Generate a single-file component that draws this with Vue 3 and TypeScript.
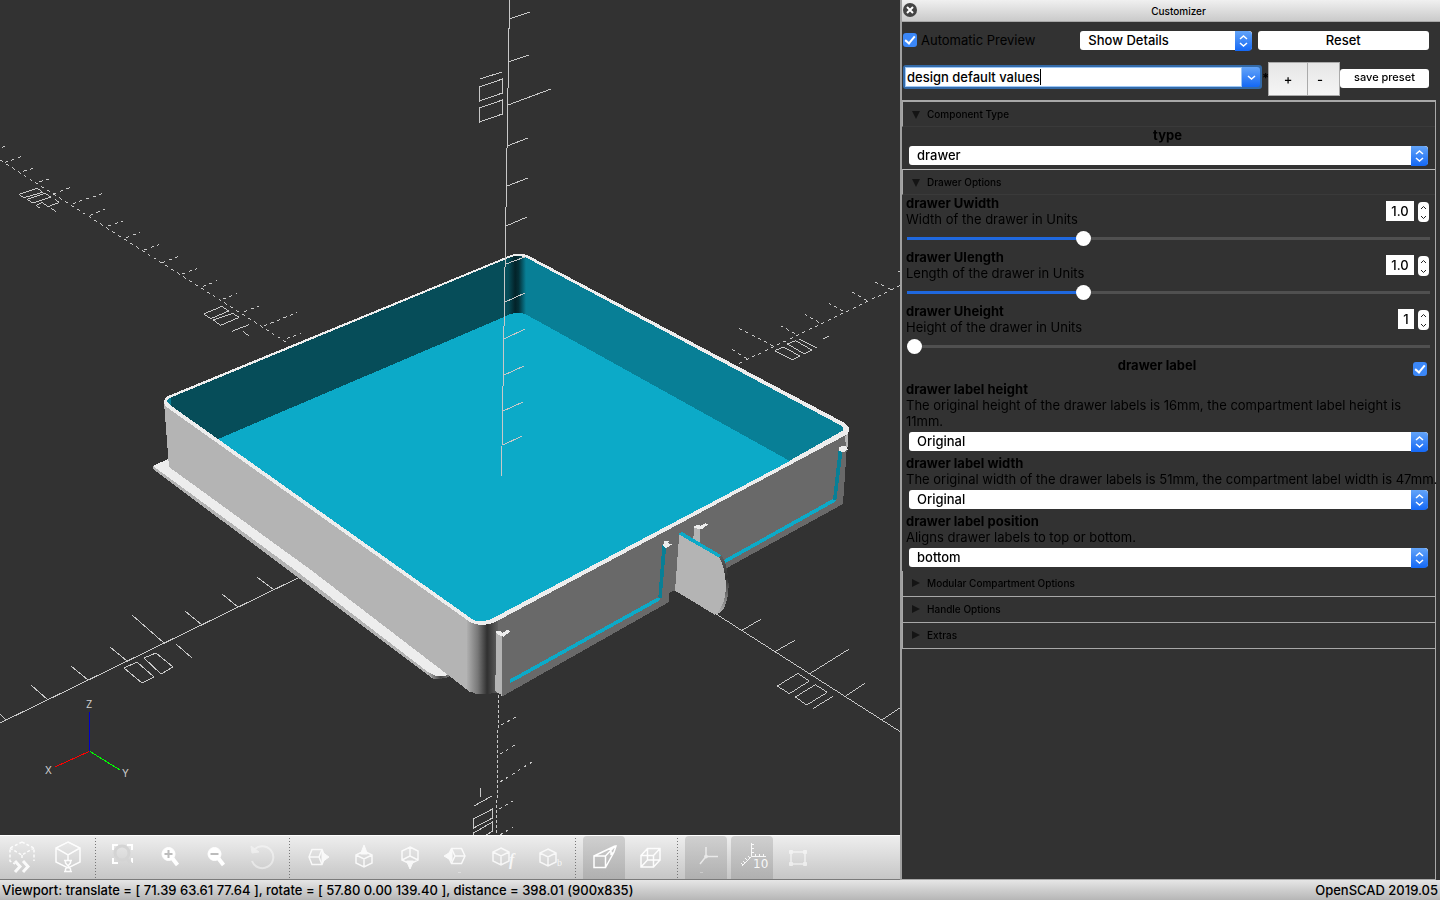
<script setup lang="ts">
import { onMounted, reactive, ref } from 'vue'

interface Shape { d: string; w?: number; fill?: string; stroke?: string; dash?: string }
interface Glyph { t: string; x: number; y: number; size: number; cls: string }
interface Tool { name: string; on?: boolean; dim?: number; shapes: Shape[]; glyph?: Glyph }

const toolGroups: Tool[][] = [
  [
    { name: 'Preview', dim: 0.9, shapes: [
      { d: 'M21 6L33 12V25M21 6L9 12V25L14 28M9 12L21 19L33 12M21 19V24', w: 1.5, dash: '3 2' },
      { d: 'M14 25L19 30.500L14 36M22 25L27 30.500L22 36', w: 3 } ] },
    { name: 'Render', dim: 0.95, shapes: [
      { d: 'M21 6L33 12V26L21 32L9 26V12ZM9 12L21 19L33 12M21 19V24', w: 1.5 },
      { d: 'M17 24.500H25M17 35.500H25M18.500 25V27L23.500 33V35M23.500 25V27L18.500 33V35', w: 1.5 } ] },
  ],
  [
    { name: 'View All', dim: 1, shapes: [
      { d: 'M10 14V9H15M24 9H29V14M29 22V27M10 22V27H15', w: 2 },
      { d: 'M12 17a7 7 0 1 0 14 0a7 7 0 1 0 -14 0M24 23L29 29', w: 3, stroke: '#d4d4d4' } ] },
    { name: 'Zoom In', dim: 1, shapes: [
      { d: 'M13 18a6.500 6.500 0 1 0 13 0a6.500 6.500 0 1 0 -13 0', w: 1, fill: '#fff' },
      { d: 'M23.500 22.500L28.500 29', w: 4 },
      { d: 'M15.500 18H23.500M19.500 14V22', w: 2, stroke: '#bcbcbc' } ] },
    { name: 'Zoom Out', dim: 1, shapes: [
      { d: 'M13 18a6.500 6.500 0 1 0 13 0a6.500 6.500 0 1 0 -13 0', w: 1, fill: '#fff' },
      { d: 'M23.500 22.500L28.500 29', w: 4 },
      { d: 'M15.500 18H23.500', w: 2, stroke: '#bcbcbc' } ] },
    { name: 'Reset View', dim: 0.45, shapes: [
      { d: 'M13 14A11 11 0 1 1 11 25', w: 2 },
      { d: 'M10 10L11 17L18 16Z', w: 1, fill: '#fff' } ] },
  ],
  [
    { name: 'Right', dim: 0.85, shapes: [
      { d: 'M12 21L15 13.500H25L28 21L25 28.500H15ZM12 21H22M25 13.500L22 21L25 28.500', w: 1.5 },
      { d: 'M25 16L32 21L25 26Z', w: 1, fill: '#fff' } ] },
    { name: 'Top', dim: 0.85, shapes: [
      { d: 'M21 15L29 19V27L21 31L13 27V19ZM13 19L21 23L29 19M21 23V31', w: 1.5 },
      { d: 'M21 9L24.500 18H17.500Z', w: 1, fill: '#fff' } ] },
    { name: 'Bottom', dim: 0.85, shapes: [
      { d: 'M21 11L29 15V24L21 28L13 24V15ZM21 11V20L13 24M21 20L29 24', w: 1.5 },
      { d: 'M21 33L24.500 25H17.500Z', w: 1, fill: '#fff' } ] },
    { name: 'Left', dim: 0.85, shapes: [
      { d: 'M30 20L26.500 12.500H16.500L13 20L16.500 27.500H26.500ZM30 20H20M16.500 12.500L20 20L16.500 27.500', w: 1.5 },
      { d: 'M17 15L9 20L17 25Z', w: 1, fill: '#fff' },
      { d: 'M23 36.500H26', w: 1, stroke: '#e0e0e0' } ] },
    { name: 'Front', dim: 0.8, shapes: [
      { d: 'M20 12L28 16V25L20 29L12 25V16ZM12 16L20 20L28 16M20 20V29', w: 1.5 } ],
      glyph: { t: 'f', x: 28, y: 29, size: 16, cls: 'ital' } },
    { name: 'Back', dim: 0.8, shapes: [
      { d: 'M21 13L29 17V26L21 30L13 26V17ZM13 17L21 21L29 17M21 21V30', w: 1.5 } ],
      glyph: { t: 'b', x: 30, y: 30, size: 10, cls: 'serif' } },
  ],
  [
    { name: 'Perspective', on: true, dim: 1, shapes: [
      { d: 'M11 20H22.500V31.500H11ZM11 20L32 10L22.500 20M32 10L33 10L31 16L22.500 31.500M28 12V18L31 16', w: 1.5 } ] },
    { name: 'Orthogonal', dim: 0.95, shapes: [
      { d: 'M12 19.500H24.500V31H12ZM18.500 12.500H31V24H18.500ZM12 19.500L18.500 12.500M24.500 19.500L31 12.500M24.500 31L31 24M12 31L18.500 24', w: 1.5 } ] },
  ],
  [
    { name: 'Show Axes', on: true, dim: 0.65, shapes: [
      { d: 'M21 11V20.500H33M21 20.500L15 28', w: 1.5 },
      { d: 'M19.500 20.500a1.500 1.500 0 1 0 3 0a1.500 1.500 0 1 0 -3 0', w: 1, fill: '#fff' },
      { d: 'M15 36.500H18', w: 1, stroke: '#d8d8d8' } ] },
    { name: 'Show Scale Markers', on: true, dim: 0.9, shapes: [
      { d: 'M20.500 7V20.500H35M20.500 20.500L11 30M21 8.500H23M21 12.500H23M21 16.500H23M24.500 18V20M28.500 18V20M32.500 18V20M17 20L19 22M14 22L17 25M12 25L14 27M10 27L12 29', w: 1 } ],
      glyph: { t: '10', x: 22, y: 32, size: 12, cls: 'sans' } },
    { name: 'Show Edges', dim: 0.6, shapes: [
      { d: 'M14 16H28V28H14Z', w: 1.5 },
      { d: 'M12.500 14.500h3v3h-3zM26.500 14.500h3v3h-3zM12.500 26.500h3v3h-3zM26.500 26.500h3v3h-3z', w: 1, fill: '#fff' } ] },
  ],
]

const autoPreview = ref(true)
const detail = ref('Show Details')
const preset = ref('design default values')
const presetBox = ref<HTMLInputElement | null>(null)

const sections = reactive([
  { title: 'Component Type', open: true },
  { title: 'Drawer Options', open: true },
  { title: 'Modular Compartment Options', open: false },
  { title: 'Handle Options', open: false },
  { title: 'Extras', open: false },
])

const componentType = ref('drawer')
const hasLabel = ref(true)
const sliders = reactive([
  { id: 'uwidth', name: 'drawer Uwidth', desc: 'Width of the drawer in Units', min: 0.5, max: 2, step: 0.5, value: 1, digits: 1 },
  { id: 'ulength', name: 'drawer Ulength', desc: 'Length of the drawer in Units', min: 0.5, max: 2, step: 0.5, value: 1, digits: 1 },
  { id: 'uheight', name: 'drawer Uheight', desc: 'Height of the drawer in Units', min: 1, max: 5, step: 1, value: 1, digits: 0 },
])
const choices = reactive([
  { id: 'lheight', name: 'drawer label height', desc: 'The original height of the drawer labels is 16mm, the compartment label height is 11mm.', oneLine: false, value: 'Original', options: ['Original', 'Compartment'] },
  { id: 'lwidth', name: 'drawer label width', desc: 'The original width of the drawer labels is 51mm, the compartment label width is 47mm.', oneLine: true, value: 'Original', options: ['Original', 'Compartment'] },
  { id: 'lpos', name: 'drawer label position', desc: 'Aligns drawer labels to top or bottom.', oneLine: true, value: 'bottom', options: ['bottom', 'top'] },
])

type Slider = (typeof sliders)[number]
const percent = (s: Slider) => ((s.value - s.min) / (s.max - s.min)) * 100 + '%'
const bump = (s: Slider, dir: number) => {
  s.value = Math.min(s.max, Math.max(s.min, s.value + dir * s.step))
}

onMounted(() => {
  const box = presetBox.value
  if (box) {
    box.focus()
    box.setSelectionRange(box.value.length, box.value.length)
  }
})
</script>

<template>
  <div class="app">
    <main class="work">
      <section class="view">
        <svg class="scene" viewBox="0 0 900 835" preserveAspectRatio="xMidYMid slice" shape-rendering="crispEdges" role="img" aria-label="3D view of the drawer">
          <defs>
            <linearGradient id="inner" gradientUnits="userSpaceOnUse" x1="508" y1="0" x2="526" y2="0">
              <stop offset="0" stop-color="#064d59" /><stop offset=".4" stop-color="#032329" /><stop offset=".6" stop-color="#043038" /><stop offset="1" stop-color="#087f96" />
            </linearGradient>
            <linearGradient id="corner" gradientUnits="userSpaceOnUse" x1="466" y1="0" x2="500" y2="0">
              <stop offset="0" stop-color="#b4b4b4" /><stop offset=".35" stop-color="#777" /><stop offset=".62" stop-color="#303030" /><stop offset="1" stop-color="#696969" />
            </linearGradient>
            <linearGradient id="flange" gradientUnits="userSpaceOnUse" x1="428" y1="0" x2="449" y2="0">
              <stop offset="0" stop-color="#b4b4b4" /><stop offset=".6" stop-color="#444" /><stop offset="1" stop-color="#777" />
            </linearGradient>
            <linearGradient id="knob" gradientUnits="userSpaceOnUse" x1="0" y1="400" x2="0" y2="580">
              <stop offset="0" stop-color="#666" /><stop offset=".4" stop-color="#303030" /><stop offset="1" stop-color="#b4b4b4" />
            </linearGradient>
          </defs>

          <!-- axis behind the drawer, left -->
          <g class="ax" transform="translate(0 130) scale(.33333)">
            <path class="dash" d="M0 90L866 641" />
            <path class="dash" d="M6 52L14 49M14 98L62 80M70 124L108 112M118 155L160 143M160 192L212 172M218 221L316 187M270 256L314 238M324 288L368 274M378 323L420 307M432 360L478 343M486 398L536 379M546 432L592 415M608 470L652 452M668 508L712 490M732 545L776 529M792 588L892 547M860 626L902 610" />
            <path d="M56 193L112 175L128 187L72 203ZM82 208L136 190L152 201L98 219ZM120 235L108 226L126 217L144 230L178 217L164 208M154 236L168 244" />
            <path d="M611 552L666 529L686 543L632 566ZM640 570L698 550L718 562L662 586ZM695 604L748 584M728 604L746 617" />
          </g>
          <!-- right-hand axes -->
          <g class="ax" transform="translate(690 270) scale(.33333)">
            <path class="dash" d="M148 280L632 46M170 266L126 238M250 228L146 175M316 192L274 168M388 158L346 133M460 124L416 99M530 92L484 64M602 58L554 35M632 6L618 0" />
            <path d="M254 242L280 231L330 258L308 269ZM292 222L316 212L366 240L344 252ZM328 208L380 233M398 207L418 197" />
            <path d="M78 1032L632 1386M154 1082L212 1048M254 1146L314 1111M358 1212L476 1138M464 1280L524 1240M576 1350L632 1312" />
            <path d="M262 1248L324 1210L358 1233L298 1271ZM316 1281L376 1244L412 1267L350 1305ZM370 1315L428 1280" />
          </g>
          <!-- lower-left axis -->
          <g class="ax1">
            <path d="M0 723L298 578M48 700L31 685M88 680L71 666M127 661L110 647M164 643L132 615M202 625L185 611M238 607L222 594M274 590L257 577M6 720L0 714" />
            <path d="M124 668L137 662L154 677L142 683ZM144 658L156 653L173 667L161 674ZM176 644L192 658" />
            <path class="zdash" d="M498.500 695L496.500 835" />
            <path class="tdash" d="M501 696L516 688M501 725L516 717M500 754L515 745M500 782L532 762M499 809L513 801M500 835L513 827" />
            <path d="M480.500 788V797M474 806L492 796M473.500 819L492.500 809V818L473.500 828ZM473.500 840V833L492.500 822V831L482 838" />
          </g>

          <!-- mounting flange -->
          <path fill="#b4b4b4" d="M153 466L295 568L434 674L440 678H432L288 570L153 469Z" />
          <path fill="url(#flange)" d="M426 668L449 673V677L440 679H434L426 673Z" />
          <path fill="#ededed" d="M153 466L168 459L180 466L311 570L448 673L446 676H436L428 672L295 570Z" />
          <!-- outer walls -->
          <path fill="#b4b4b4" d="M164 402L470 620V692L448 675L311 570L169 467Z" />
          <path fill="url(#corner)" d="M467 616L480 622L500 615V692L488 694H476L467 690Z" />
          <path fill="#696969" d="M498 616L848 430L843 504L725 569L700 560L675 591L669 594V602L503 696L496 690Z" />
          <path fill="#b4b4b4" d="M845 436L848 433V447H846Z" />
          <!-- rim -->
          <path fill="#ededed" d="M164 401Q165 398 168 396L511 255Q519 252 527 255L843 422Q850 426 849 431Q848 434 846 435L499 620Q490 625 480 625Q474 624 470 622L165 406Z" />
          <!-- inside -->
          <path fill="#064d59" d="M167 401Q168 398 172 397L511 257Q516 256 519 256V330L218 439L170 405Z" />
          <path fill="#087f96" d="M524 257L527 258L840 425Q846 429 842 431L789 461L524 330Z" />
          <path fill="url(#inner)" d="M508 258L511 257Q519 254 526 258V330H508Z" />
          <path fill="#0caac8" d="M218 439L504 317Q516 310 527 315L790 461L495 617Q489 621 480 621Q475 621 472 619Z" />
          <path fill="#0a7e94" d="M167 401Q168 398 171 398V405L168 403Z" />

          <!-- label holders and handle -->
          <g transform="translate(420 420) scale(.33333)">
            <path fill="#b4b4b4" d="M228 638L246 646V826L226 814Z" />
            <path fill="#ededed" d="M228 632H240L248 638L262 630L272 634L250 650L230 642Z" />
            <path fill="#0caac8" d="M270 778L714 532L722 536L718 542L270 790Z" />
            <path fill="#087f96" d="M727 376L738 384L725 534L715 532Z" />
            <path fill="#ededed" d="M734 362L746 364L744 370L756 374L738 384L728 378Z" />
            <path fill="#b4b4b4" d="M822 320L840 326V370L820 360Z" />
            <path fill="#ededed" d="M822 318L835 314L842 318L856 310L864 314L844 328L824 324Z" />
            <path fill="#0caac8" d="M911 420L1240 236L1248 240L1244 246L911 432Z" />
            <path fill="#087f96" d="M1256 88L1267 96L1249 240L1239 240Z" />
            <path fill="#ededed" d="M1258 80L1276 78L1284 88L1270 97L1258 92Z" />
            <path fill="#323232" d="M748 548V520L756 514L768 512L884 584L928 560V442L912 446L905 500L780 470L766 512Z" />
            <path fill="url(#knob)" d="M895 408L906 406Q924 440 926 495Q924 560 900 578L884 584Z" />
            <path fill="#b4b4b4" d="M778 340L896 408Q916 440 918 500Q916 560 884 584L765 512Z" />
            <path fill="#0caac8" d="M778 344V338L788 337L904 406L896 412Z" />
          </g>

          <!-- vertical axis -->
          <path class="ax1" d="M509.500 0L501.500 476M509 19L530 12M508 62L529 55M508 105L551 89M507 146L528 138M507 186L528 178M506 226L527 217M506 264L525 257M505 302L525 293M504 339L525 329M504 375L524 366M503 411L523 402M503 445L522 436M480 79L502 72M479.500 87L502.500 79V93L479.500 101ZM479.500 108L502.500 100V114L479.500 122Z" />

          <!-- orientation marker -->
          <g fill="none">
            <path stroke="#0000c8" d="M89.500 712V751" />
            <path stroke="#f00" d="M89 751.500L55 767" />
            <path stroke="#0f0" d="M90 751.500L120 770" />
          </g>
          <g class="names"><text x="86" y="708">Z</text><text x="45" y="774">X</text><text x="122" y="777">Y</text></g>
        </svg>

        <div class="toolbar" role="toolbar" aria-label="View">
          <template v-for="(group, g) in toolGroups" :key="g">
            <span v-if="g" class="sep"></span>
            <button v-for="t in group" :key="t.name" type="button" class="tool" :class="{ on: t.on }" :aria-label="t.name">
              <svg viewBox="0 0 42 43" width="42" height="43" :opacity="t.dim">
                <path v-for="(s, i) in t.shapes" :key="i" :d="s.d" :fill="s.fill || 'none'" :stroke="s.stroke || '#fff'" :stroke-width="s.w" :stroke-dasharray="s.dash" />
                <text v-if="t.glyph" :x="t.glyph.x" :y="t.glyph.y" :font-size="t.glyph.size" :class="t.glyph.cls" fill="#fff">{{ t.glyph.t }}</text>
              </svg>
            </button>
          </template>
        </div>
      </section>

      <aside class="panel">
        <header class="title">
          <button type="button" class="close" aria-label="Close">
            <svg viewBox="0 0 14 14" width="14" height="14"><circle cx="7" cy="7" r="7" fill="#444" /><path d="M4 4L10 10M10 4L4 10" stroke="#fff" stroke-width="2" /></svg>
          </button>
          <h1>Customizer</h1>
        </header>

        <div class="row top">
          <label class="auto"><input v-model="autoPreview" type="checkbox" class="tick" />Automatic Preview</label>
          <span class="pick">
            <select v-model="detail" aria-label="Description detail"><option>Show Details</option><option>Inline Details</option><option>Hide Details</option></select>
            <svg class="arrows" viewBox="0 0 17 20" width="17" height="20"><path d="M5 8L8.500 5L12 8M5 12L8.500 15L12 12" /></svg>
          </span>
          <button type="button" class="plain">Reset</button>
        </div>

        <div class="row presets">
          <div class="combo">
            <div class="field">
              <input ref="presetBox" v-model="preset" type="text" aria-label="Preset" spellcheck="false" />
              <span class="caret" aria-hidden="true">{{ preset }}</span>
            </div>
            <button type="button" aria-label="Choose preset"><svg viewBox="0 0 18 20" width="18" height="20"><path d="M6 9L9.500 12L13 9" /></svg></button>
          </div>
          <span class="star">*</span>
          <div class="pm"><button type="button" class="add">+</button><button type="button" class="sub">-</button></div>
          <button type="button" class="plain save">save preset</button>
        </div>

        <div class="frame">
          <section v-for="(sec, n) in sections" :key="sec.title" class="group" :class="{ open: sec.open }">
            <h2>
              <button type="button" :aria-expanded="sec.open" @click="sec.open = !sec.open">
                <svg viewBox="0 0 10 10" width="10" height="10"><path :d="sec.open ? 'M1 2H9L5 10Z' : 'M1 1V9L9 5Z'" fill="#141414" /></svg>{{ sec.title }}
              </button>
            </h2>

            <div v-if="sec.open && n === 0" class="body">
              <label class="name mid" for="ctype">type</label>
              <span class="pick wide">
                <select id="ctype" v-model="componentType"><option>drawer</option><option>frame</option></select>
                <svg class="arrows" viewBox="0 0 17 20" width="17" height="20"><path d="M5 8L8.500 5L12 8M5 12L8.500 15L12 12" /></svg>
              </span>
            </div>

            <div v-if="sec.open && n === 1" class="body">
              <div v-for="s in sliders" :key="s.id" class="param">
                <div class="head">
                  <div class="words"><label class="name" :for="s.id">{{ s.name }}</label><p>{{ s.desc }}</p></div>
                  <input class="num" :class="{ short: !s.digits }" type="text" inputmode="decimal" :aria-label="s.name + ' value'" :value="s.value.toFixed(s.digits)" @change="s.value = Number(($event.target as HTMLInputElement).value) || s.min" />
                  <span class="spin">
                    <button type="button" :aria-label="'Increase ' + s.name" @click="bump(s, 1)"><svg viewBox="0 0 11 10" width="11" height="10"><path d="M3 7L5.500 4.500L8 7" /></svg></button>
                    <button type="button" :aria-label="'Decrease ' + s.name" @click="bump(s, -1)"><svg viewBox="0 0 11 10" width="11" height="10"><path d="M3 4L5.500 6.500L8 4" /></svg></button>
                  </span>
                </div>
                <input :id="s.id" v-model.number="s.value" type="range" :min="s.min" :max="s.max" :step="s.step" :style="{ '--at': percent(s) }" />
              </div>

              <div class="flag"><label class="name mid" for="haslabel">drawer label</label><input id="haslabel" v-model="hasLabel" type="checkbox" class="tick" /></div>

              <div v-for="c in choices" :key="c.id" class="param">
                <label class="name" :for="c.id">{{ c.name }}</label>
                <p :class="{ single: c.oneLine }">{{ c.desc }}</p>
                <span class="pick wide">
                  <select :id="c.id" v-model="c.value"><option v-for="o in c.options" :key="o">{{ o }}</option></select>
                  <svg class="arrows" viewBox="0 0 17 20" width="17" height="20"><path d="M5 8L8.500 5L12 8M5 12L8.500 15L12 12" /></svg>
                </span>
              </div>
            </div>
          </section>
        </div>
      </aside>
    </main>

    <footer class="status"><span>Viewport: translate = [ 71.39 63.61 77.64 ], rotate = [ 57.80 0.00 139.40 ], distance = 398.01 (900x835)</span><span>OpenSCAD 2019.05</span></footer>
  </div>
</template>

<style>
html, body { background: #323232; }
</style>

<style scoped>
* { box-sizing: border-box; }
.app { display: flex; flex-direction: column; height: 100vh; background: #323232; color: #000; font: 13px/16px Inter, "Liberation Sans", sans-serif; font-variant-ligatures: no-contextual; overflow: hidden; }
button, input, select { font: inherit; color: inherit; margin: 0; padding: 0; border: 0; outline: 0; }
button { cursor: default; }
h1, h2, p { margin: 0; }
.work { flex: 1; min-height: 0; display: grid; grid-template-columns: minmax(0, 5fr) minmax(0, 3fr); }
.view { display: flex; flex-direction: column; min-height: 0; }
.scene { flex: 1; min-height: 0; width: 100%; display: block; }
.ax path { fill: none; stroke: #c8c8c8; stroke-width: 3; }
.ax .dash { stroke-dasharray: 10 11; }
.ax1, .ax1 path { fill: none; stroke: #c8c8c8; stroke-width: 1; }
.ax1 .zdash { stroke-dasharray: 3 2; }
.ax1 .tdash { stroke-dasharray: 3 4; }
.names text { font-size: 10px; fill: #d0d0d0; }

.toolbar { flex: none; height: 45px; padding: 0 1px; display: flex; gap: 4px; align-items: stretch; border-top: 1px solid #fff; border-bottom: 1px solid #7a7a7a; background: linear-gradient(#eee, #c6c6c6); overflow: hidden; }
.tool { flex: none; width: 42px; background: none; border-radius: 4px 4px 0 0; }
.tool.on { background: linear-gradient(#d0d0d0, #b0b0b0); }
.tool svg { display: block; }
.sep { flex: none; width: 6px; background: repeating-linear-gradient(transparent 0 2px, #777 2px 3px) 2px 0 / 1px 100% no-repeat; }
.ital { font-family: "Liberation Serif", serif; font-style: italic; font-weight: 700; }
.serif { font-family: "Liberation Serif", serif; }
.sans { font-family: "DejaVu Sans", sans-serif; }

.panel { display: flex; flex-direction: column; min-height: 0; border-left: 2px solid #a0a0a0; }
.title { flex: none; height: 22px; display: flex; align-items: center; padding-left: 1px; background: linear-gradient(#f0f0f0, #cacaca); border-bottom: 1px solid #a8a8a8; }
.title h1 { flex: 1; text-align: center; font-size: 10px; line-height: 16px; font-weight: 500; }
.close { width: 14px; height: 14px; margin-bottom: 1px; background: none; display: flex; }
.row { flex: none; margin: 0 11px 0 1px; display: flex; align-items: center; }
.top { display: grid; grid-template-columns: repeat(3, minmax(0, 1fr)); gap: 6px; height: 37px; }
.auto { display: flex; align-items: center; gap: 4px; padding-bottom: 1px; white-space: nowrap; }
.tick { appearance: none; flex: none; width: 14px; height: 14px; border-radius: 3px; background: #3b87f7; display: grid; place-items: center; }
.tick:checked::before { content: ""; width: 4px; height: 8px; margin-bottom: 2px; border: solid #fff; border-width: 0 2px 2px 0; transform: rotate(40deg); }
.pick { display: grid; height: 19px; }
.pick > * { grid-area: 1 / 1; }
.pick select { appearance: none; width: 100%; height: 19px; padding: 0 24px 2px 8px; border-radius: 3px; background: #fff; font-weight: 500; }
.arrows { justify-self: end; pointer-events: none; border-radius: 0 4px 4px 0; background: linear-gradient(#63a4f8, #1468f5); }
.arrows path, .combo path { fill: none; stroke: #fff; stroke-width: 1.5; }
.plain { height: 19px; padding-bottom: 2px; border-radius: 3px; background: #fff; font-weight: 500; }
.presets { height: 38px; }
.combo { flex: 1; min-width: 0; display: flex; height: 24px; margin-bottom: 2px; padding: 2px; border-radius: 3px; background: #336aa8; }
.field { flex: 1; min-width: 0; display: grid; justify-items: start; align-items: center; background: #fff; border: 1px solid #9cc6f5; font-weight: 500; overflow: hidden; }
.field > * { grid-area: 1 / 1; }
.field input { width: 100%; padding: 0 1px; background: none; line-height: 18px; caret-color: transparent; }
.caret { padding-left: 1px; color: transparent; border-right: 1px solid #000; pointer-events: none; white-space: pre; }
.combo button { width: 18px; background: linear-gradient(#63a4f8, #1468f5); border-radius: 0 3px 3px 0; display: flex; }
.star { width: 6px; font-weight: 700; }
.pm { display: flex; height: 34px; margin-top: 2px; border: 1px solid #aaa; background: linear-gradient(#e6e6e6, #f5f5f5); }
.pm button { background: none; font-weight: 500; }
.pm .add { width: 39px; border-right: 1px solid #aaa; }
.pm .sub { width: 31px; padding-right: 7px; }
.save { width: 89px; font-size: 11px; }

.frame { flex: 1; min-height: 0; margin: 3px 4px 0 0; border: 1px solid #a8a8a8; border-left: 0; border-top-width: 2px; overflow: visible clip; }
.group h2 { font-size: 10px; font-weight: 500; height: 26px; border-bottom: 1px solid #a8a8a8; border-left: 1px solid #a8a8a8; }
.group h2 button { width: 100%; height: 25px; display: flex; align-items: center; gap: 6px; padding: 0 0 2px 8px; background: none; text-align: left; }
.group.open h2 { height: 25px; border-bottom-color: #3a3a3a; }
.group.open + .group.open h2 { height: 26px; border-top: 1px solid #b8b8b8; }
.body { padding: 0 6px 0 4px; }
.single { white-space: nowrap; }
.name { display: block; font-weight: 700; line-height: 16px; }
.mid { flex: 1; text-align: center; }
.wide { margin: 3px 1px 4px 3px; }
.head { display: flex; align-items: flex-start; }
.words { flex: 1; min-width: 0; }
.num { width: 28px; height: 20px; margin-top: 6px; background: #fff; text-align: center; font-weight: 500; }
.num.short { width: 16px; }
.spin { width: 11px; height: 20px; margin: 7px 0 0 4px; border-radius: 4px; background: #fff; overflow: hidden; }
.spin button { display: block; height: 10px; background: none; }
.spin svg { display: block; }
.spin path { fill: none; stroke: #222; stroke-width: 1; }
input[type="range"] { appearance: none; display: block; width: 100%; height: 22px; margin-left: 1px; background: linear-gradient(#1f68de, #1f68de) 0 50% / var(--at) 3px no-repeat, linear-gradient(#505050, #505050) 0 50% / 100% 3px no-repeat; }
input[type="range"]::-webkit-slider-thumb { appearance: none; width: 15px; height: 15px; border-radius: 50%; background: #fff; }
.flag { display: flex; gap: 5px; height: 24px; }
.flag .tick { margin: 5px 2px 0 0; }

.status { flex: none; height: 20px; padding: 0 2px; display: flex; justify-content: space-between; align-items: center; background: linear-gradient(#e6e6e6, #b6b6b6); font-weight: 500; white-space: nowrap; }
</style>
